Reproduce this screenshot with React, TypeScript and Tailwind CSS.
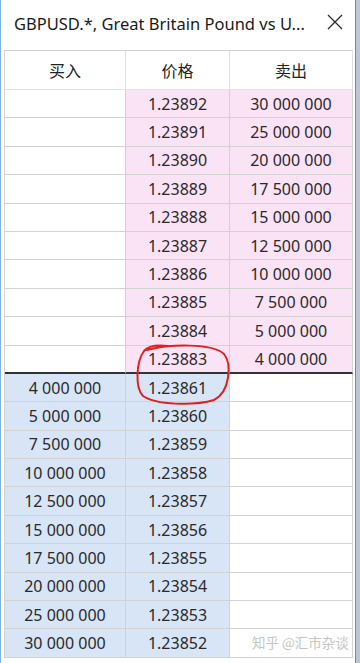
const asks = [
  ['1.23892', '30 000 000'],
  ['1.23891', '25 000 000'],
  ['1.23890', '20 000 000'],
  ['1.23889', '17 500 000'],
  ['1.23888', '15 000 000'],
  ['1.23887', '12 500 000'],
  ['1.23886', '10 000 000'],
  ['1.23885', '7 500 000'],
  ['1.23884', '5 000 000'],
  ['1.23883', '4 000 000'],
]

const bids = [
  ['4 000 000', '1.23861'],
  ['5 000 000', '1.23860'],
  ['7 500 000', '1.23859'],
  ['10 000 000', '1.23858'],
  ['12 500 000', '1.23857'],
  ['15 000 000', '1.23856'],
  ['17 500 000', '1.23855'],
  ['20 000 000', '1.23854'],
  ['25 000 000', '1.23853'],
  ['30 000 000', '1.23852'],
]

const cell = 'h-[28.4px] flex items-center justify-center border-r border-b border-[#d2d2d2]'

export default function App() {
  return (
    <div
      className="relative flex w-[360px] h-[663px] overflow-hidden bg-white text-[#2a2a2a]"
      style={{ fontFamily: '"Noto Sans", "Noto Sans CJK SC", sans-serif' }}
    >
      <div className="w-px bg-[#7fb2e0]" />
      <div className="flex flex-1 flex-col">
        {/* title bar */}
        <div className="flex h-[48px] items-center justify-between pl-[13px] pr-[12px]">
          <span className="text-[16.5px] text-[#1a1a1a] whitespace-nowrap">
            GBPUSD.*, Great Britain Pound vs U...
          </span>
          <svg width="16" height="16" viewBox="0 0 16 16" className="-mt-[4px]">
            <path d="M1 1 L15 15 M15 1 L1 15" stroke="#2a2a2a" strokeWidth="1.3" />
          </svg>
        </div>

        {/* depth of market table */}
        <div className="ml-[3px] mt-[2px] w-[349px] border-l border-t border-[#d2d2d2] grid grid-cols-[121px_104px_123px] text-[16px]">
          {['买入', '价格', '卖出'].map((h) => (
            <div
              key={h}
              className="h-[39px] flex items-center justify-center border-r border-b border-[#e2e2e2] text-[16px] text-[#222]"
              style={{ fontFamily: '"Noto Sans CJK SC", sans-serif' }}
            >
              {h}
            </div>
          ))}

          {asks.map(([price, vol], i) => {
            const last = i === asks.length - 1
            const sep = last ? ' !border-b-2 !border-b-[#333]' : ''
            return [
              <div key={'a0' + i} className={cell + ' bg-white' + sep} />,
              <div key={'a1' + i} className={cell + ' bg-[#fbe3f6]' + sep}>{price}</div>,
              <div key={'a2' + i} className={cell + ' bg-[#fbe3f6]' + sep}>{vol}</div>,
            ]
          })}

          {bids.map(([vol, price], i) => [
            <div key={'b0' + i} className={cell + ' bg-[#d8e5f7]'}>{vol}</div>,
            <div key={'b1' + i} className={cell + ' bg-[#d8e5f7]'}>{price}</div>,
            <div key={'b2' + i} className={cell + ' bg-white'} />,
          ])}
        </div>
      </div>
      <div className="w-px bg-[#5a8fc4]" />
      <div className="w-[4px] bg-[#b9c7d6]" />

      {/* red hand-drawn mark */}
      <svg className="pointer-events-none absolute inset-0" width="360" height="663" viewBox="0 0 360 663">
        <path
          d="M147 350 C170 344, 212 343, 224 354 C232 364, 230 392, 214 400 C194 406, 156 405, 143 396 C135 388, 136 362, 144 351 C149 345, 160 345, 168 346"
          fill="none"
          stroke="#e0201c"
          strokeWidth="2"
          strokeLinecap="round"
        />
      </svg>

      {/* watermark */}
      <div
        className="pointer-events-none absolute left-[252px] top-[632px] text-[13.5px] text-[#c4c4c4] whitespace-nowrap"
        style={{ fontFamily: '"Noto Sans CJK SC", sans-serif' }}
      >
        知乎 @汇市杂谈
      </div>
    </div>
  )
}
